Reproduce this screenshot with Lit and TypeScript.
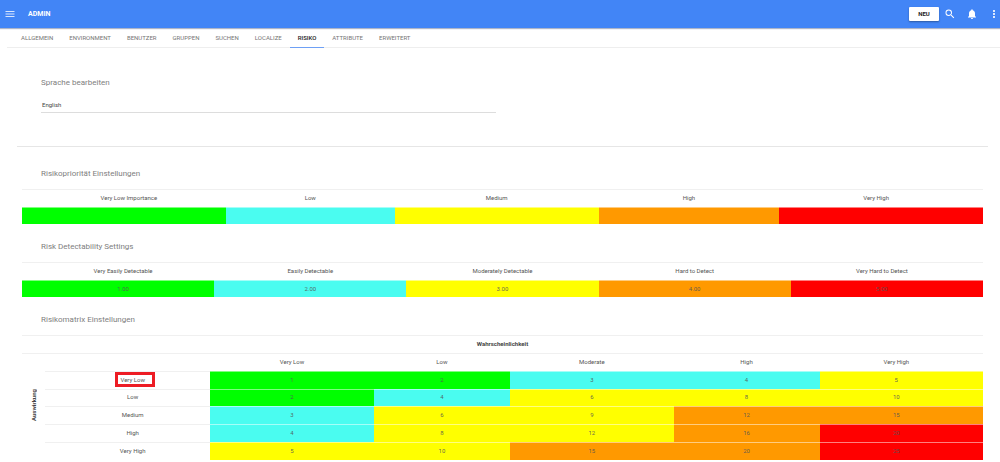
import { LitElement, html, css, svg } from "lit";
import { customElement } from "lit/decorators.js";

type Level = "g" | "c" | "y" | "o" | "r";

const TABS = ["Allgemein", "Environment", "Benutzer", "Gruppen", "Suchen", "Localize", "Risiko", "Attribute", "Erweitert"];
const LEVELS: Level[] = ["g", "c", "y", "o", "r"];
const PRIORITY = ["Very Low Importance", "Low", "Medium", "High", "Very High"];
const DETECT = ["Very Easily Detectable", "Easily Detectable", "Moderately Detectable", "Hard to Detect", "Very Hard to Detect"];
const LIKELIHOOD = ["Very Low", "Low", "Moderate", "High", "Very High"];
const MATRIX: { name: string; marked?: boolean; levels: string }[] = [
  { name: "Very Low", marked: true, levels: "ggccy" },
  { name: "Low", levels: "gcyyy" },
  { name: "Medium", levels: "cyyoo" },
  { name: "High", levels: "cyyor" },
  { name: "Very High", levels: "yyoor" },
];

const icon = (path: string, cls = "") => html`<svg class=${cls} viewBox="0 0 24 24" aria-hidden="true">${svg`<path d=${path}></path>`}</svg>`;

@customElement("app-root")
export class AppRoot extends LitElement {
  static styles = css`
    :host {
      display: block;
      font-family: Roboto, "Liberation Sans", sans-serif;
      font-size: 6px;
      line-height: 8px;
      color: #555;
      background: #fff;
    }
    * { box-sizing: border-box; }
    button { font: inherit; color: inherit; border: 0; padding: 0; background: none; cursor: pointer; }
    .bar {
      display: flex;
      align-items: center;
      gap: 10px;
      height: 28px;
      padding-left: 4px;
      background: #4285f6;
      color: #fff;
      box-shadow: 0 1px 1px rgba(50, 70, 120, 0.4);
    }
    .bar h1 { flex: 1; margin: 0 0 0 2px; font-size: 7px; font-weight: 700; }
    .tool { display: flex; }
    .tool svg { width: 12px; height: 12px; fill: #fff; }
    .tool .thin { opacity: 0.8; }
    .new {
      width: 30px;
      height: 14px;
      margin-right: -5px;
      border-radius: 1px;
      background: #fff;
      color: #222;
      font-weight: 700;
      box-shadow: 0 1px 2px rgba(0, 0, 0, 0.35);
    }
    .tabs {
      display: flex;
      height: 20px;
      margin-left: 7px;
      padding-left: 6px;
      border-bottom: 1px solid #eee;
    }
    .tabs a {
      display: flex;
      align-items: center;
      height: 20px;
      padding: 0 8px;
      border-bottom: 1px solid transparent;
      color: #757575;
      text-decoration: none;
      text-transform: uppercase;
    }
    .tabs a.on { color: #222; font-weight: 500; border-color: #6ea0f5; }
    main { padding: 0 12px 0 17px; }
    .language { padding: 30px 0 33px 24px; border-bottom: 1px solid #e6e6e6; }
    label, h2 { display: block; margin: 0; font-size: 8px; font-weight: 400; line-height: 10px; color: #808080; }
    select {
      display: block;
      appearance: none;
      width: 48%;
      height: 15px;
      margin-top: 10px;
      padding: 0 1px 1px;
      border: 0;
      border-bottom: 1px solid #ddd;
      border-radius: 0;
      background: none;
      font: inherit;
      color: #444;
    }
    .risk { padding: 22px 5px 0; }
    .risk + .risk { padding-top: 18px; }
    h2 { padding-left: 19px; margin-bottom: 10px; }
    table {
      width: 100%;
      table-layout: fixed;
      border-spacing: 0;
      text-align: center;
    }
    th, td { height: 18px; padding: 0 0 1px; font-weight: 400; border-top: 1px solid #f0f0f0; }
    td { height: 17px; }
    th:first-child:not(.side), td:first-child, .pad { padding-left: 10px; }
    th:last-child, td:last-child { padding-right: 10px; }
    .matrix { height: 125px; }
    .matrix th, .matrix td { height: auto; }
    .matrix th.title { padding: 0 0 1px; font-weight: 700; color: #444; }
    .side { font-weight: 700; color: #444; }
    .side span { display: inline-block; writing-mode: vertical-rl; transform: rotate(180deg); }
    .g, .c, .y, .o, .r { border-color: rgba(255, 255, 255, 0.5); color: rgba(85, 85, 85, 0.9); }
    .g { background: #00ff00; }
    .c { background: #4afcf0; }
    .y { background: #ffff00; }
    .o { background: #ff9900; }
    .r { background: #ff0000; }
    .marked { position: relative; }
    .marked::after {
      content: "";
      position: absolute;
      inset: -4px -10px -4px -5px;
      border: 3px solid #ed1c24;
    }
    .p20 { width: 20%; }
    .w1 { width: 21.2%; } .w2 { width: 17.6%; } .w3 { width: 21.2%; } .w4 { width: 18.8%; } .w5 { width: 21.2%; }
    .m0 { width: 2.4%; } .m1 { width: 17.2%; } .m2 { width: 17%; } .m3 { width: 14.2%; }
    .m4 { width: 17%; } .m5 { width: 15.2%; } .m6 { width: 17%; }
  `;

  private scale(names: string[], widths: string[], values: string[]) {
    return html`<table>
      <colgroup>${widths.map((w) => html`<col class=${w}>`)}</colgroup>
      <thead><tr>${names.map((n) => html`<th scope="col">${n}</th>`)}</tr></thead>
      <tbody><tr>${LEVELS.map((l, i) => html`<td class=${l}>${values[i] ?? ""}</td>`)}</tr></tbody>
    </table>`;
  }

  render() {
    return html`
      <header class="bar">
        <button aria-label="Menü" class="tool">${icon("M3 18h18v-2H3v2zm0-5h18v-2H3v2zm0-7v2h18V6H3z", "thin")}</button>
        <h1>ADMIN</h1>
        <button class="new">NEU</button>
        <button class="tool" aria-label="Suche">${icon("M15.5 14h-.79l-.28-.27A6.471 6.471 0 0 0 16 9.5 6.5 6.5 0 1 0 9.500 16c1.610 0 3.090-.59 4.230-1.570l.27.28v.79l5 4.990L20.490 19l-4.990-5zm-6 0C7.010 14 5 11.990 5 9.500S7.010 5 9.500 5 14 7.010 14 9.500 11.990 14 9.500 14z")}</button>
        <button class="tool" aria-label="Benachrichtigungen">${icon("M12 22c1.100 0 2-.9 2-2h-4c0 1.100.89 2 2 2zm6-6v-5c0-3.070-1.640-5.640-4.500-6.320V4c0-.83-.67-1.500-1.500-1.500s-1.500.67-1.500 1.500v.68C7.630 5.360 6 7.920 6 11v5l-2 2v1h16v-1l-2-2z")}</button>
        <button class="tool" aria-label="Mehr">${icon("M12 8c1.100 0 2-.9 2-2s-.9-2-2-2-2 .9-2 2 .9 2 2 2zm0 2c-1.100 0-2 .9-2 2s.9 2 2 2 2-.9 2-2-.9-2-2-2zm0 6c-1.100 0-2 .9-2 2s.9 2 2 2 2-.9 2-2-.9-2-2-2z")}</button>
      </header>
      <nav class="tabs">${TABS.map((t) => html`<a href="#" class=${t === "Risiko" ? "on" : ""}>${t}</a>`)}</nav>
      <main>
        <section class="language">
          <label for="lang">Sprache bearbeiten</label>
          <select id="lang"><option>English</option></select>
        </section>
        <section class="risk">
          <h2>Risikopriorität Einstellungen</h2>
          ${this.scale(PRIORITY, ["w1", "w2", "w3", "w4", "w5"], [])}
        </section>
        <section class="risk">
          <h2>Risk Detectability Settings</h2>
          ${this.scale(DETECT, Array(5).fill("p20"), ["1.00", "2.00", "3.00", "4.00", "5.00"])}
        </section>
        <section class="risk">
          <h2>Risikomatrix Einstellungen</h2>
          <table class="matrix">
            <colgroup>${[0, 1, 2, 3, 4, 5, 6].map((i) => html`<col class="m${i}">`)}</colgroup>
            <tbody>
              <tr><th class="title" colspan="7">Wahrscheinlichkeit</th></tr>
              <tr>
                <th class="side" rowspan="6"><span>Auswirkung</span></th>
                <td></td>
                ${LIKELIHOOD.map((n) => html`<th scope="col">${n}</th>`)}
              </tr>
              ${MATRIX.map((row, r) => html`<tr>
                <td class="pad"><span class=${row.marked ? "marked" : ""}>${row.name}</span></td>
                ${[...row.levels].map((l, c) => html`<td class=${l}>${(r + 1) * (c + 1)}</td>`)}
              </tr>`)}
            </tbody>
          </table>
        </section>
      </main>
    `;
  }
}
